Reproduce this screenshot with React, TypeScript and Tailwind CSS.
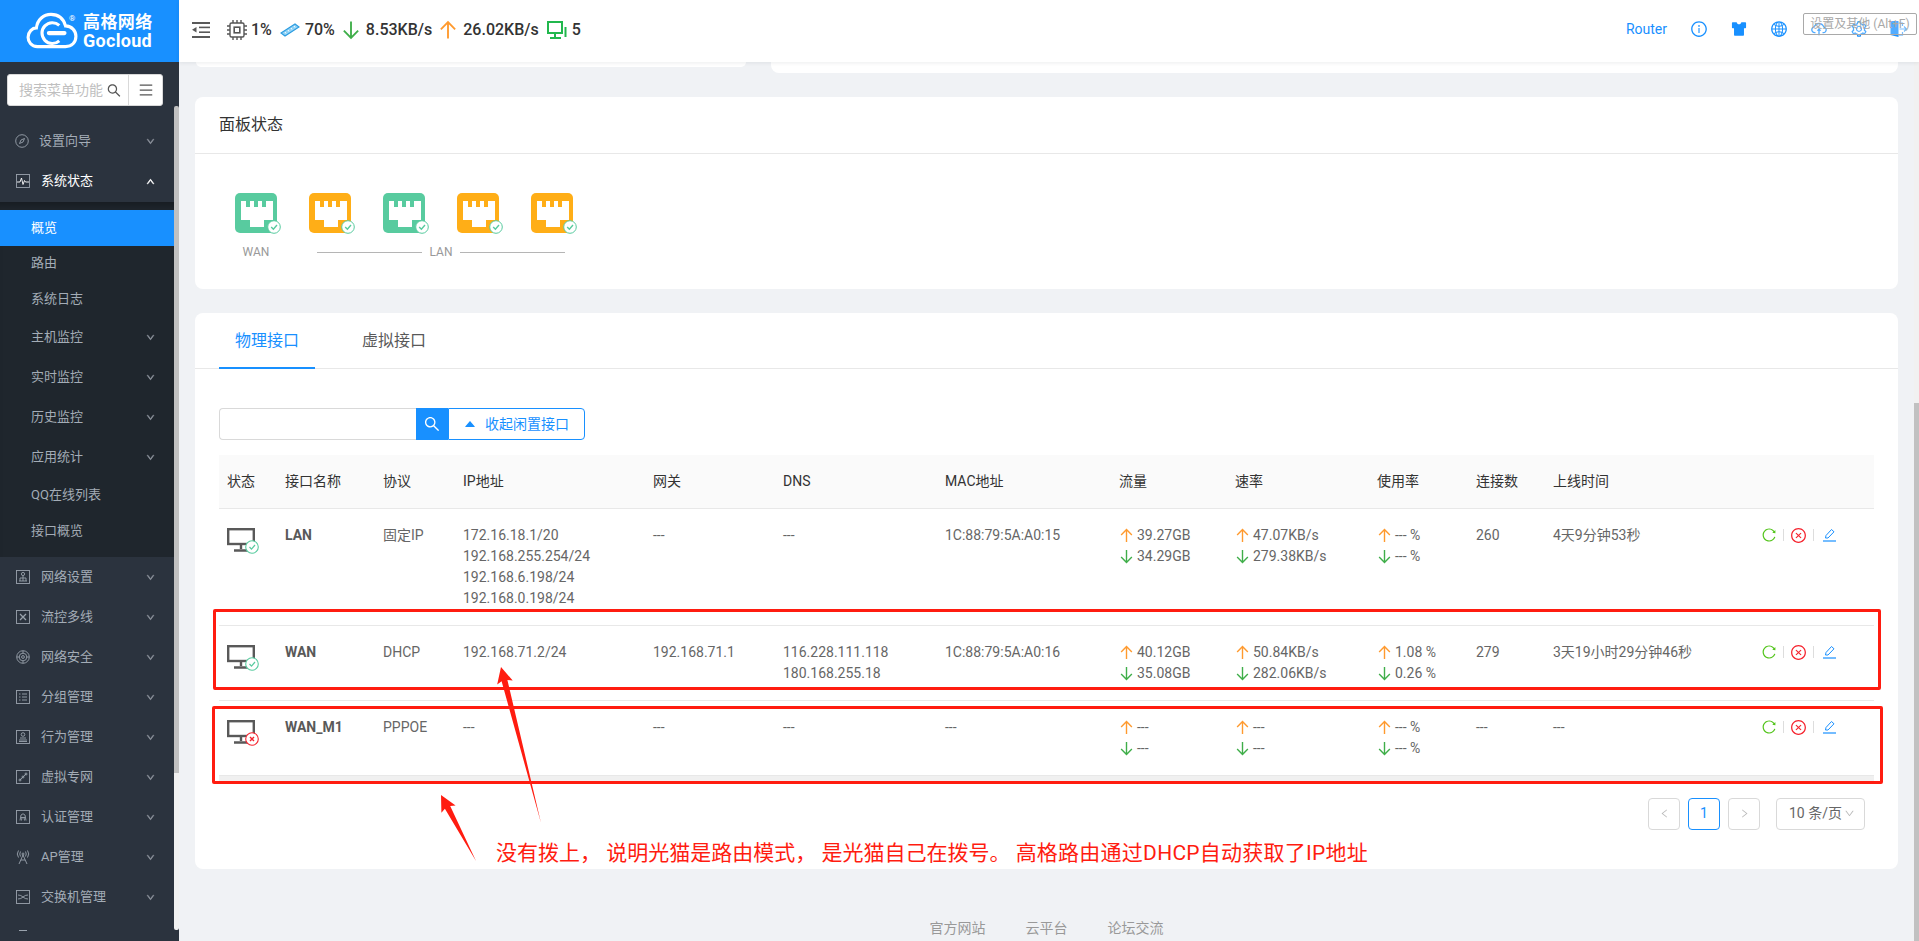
import { AiOutlineInfoCircle, AiFillSkin, AiOutlineGlobal, AiOutlineCloudUpload, AiOutlineSetting, AiOutlineReload, AiOutlineCloseCircle, AiOutlineSearch, AiOutlineMenu, AiOutlineDown, AiOutlineUp, AiOutlineLeft, AiOutlineRight, AiFillCaretUp } from "react-icons/ai";
import type { ReactNode } from "react";

function Logo() {
  return (
    <div className="h-[62px] bg-[#1890ff] flex items-center relative shrink-0">
      <svg width="52" height="37" viewBox="0 0 50 35" className="ml-[26px] mt-[-1px]" fill="none" stroke="white">
        <path strokeWidth="3" d="M11 33 C5 33 2 28 2 24 C2 19 6 15 10 15 C11 7 17 2 24 2 C31 2 36 6 38 13 C44 13 48 18 48 23 C48 29 44 33 38 33 Z" />
        <path strokeWidth="3" d="M32 12.5 A10 10 0 1 0 32 27.5" />
        <path strokeWidth="4" strokeLinecap="round" d="M22 20 H37" />
      </svg>
      <div className="ml-[5px] text-white font-bold leading-none mt-[-1px]">
        <div className="text-[17px] tracking-[0.4px] leading-[20px]">高格网络</div>
        <div className="text-[18px] tracking-[0.3px] leading-[18px]">Gocloud</div>
      </div>
      <span className="absolute left-[69px] top-[15px] text-[8px] text-white leading-none">®</span>
    </div>
  );
}

function Box({ children }: { children: ReactNode }) {
  return (
    <svg width="14" height="14" viewBox="0 0 14 14" fill="none" stroke="#9aa3ad" strokeWidth="0.9" className="shrink-0">
      <rect x="0.5" y="0.5" width="13" height="13" />
      {children}
    </svg>
  );
}

const menuIcons: Record<string, ReactNode> = {
  guide: (
    <svg width="14" height="14" viewBox="0 0 14 14" fill="none" stroke="#9aa3ad" strokeWidth="0.9" className="shrink-0 -ml-px">
      <circle cx="7" cy="7" r="6.3" />
      <path d="M9.5 4.5 L8 8 L4.5 9.5 L6 6 Z" />
    </svg>
  ),
  status: <Box><path stroke="#ffffff" d="M1 8 H4 L5.5 4 L7 10.5 L8.5 6.5 L9.5 8 H13" /></Box>,
  net: <Box><circle cx="7" cy="4" r="1.6" /><path d="M4 11 V8 H10 V11 M7 6 V11 M3 11 H11" /></Box>,
  flow: <Box><path d="M4 4 L10 10 M10 4 L4 10" strokeWidth="1.3" /></Box>,
  sec: (
    <svg width="14" height="14" viewBox="0 0 14 14" fill="none" stroke="#9aa3ad" strokeWidth="0.9" className="shrink-0">
      <circle cx="7" cy="7" r="6.3" />
      <circle cx="7" cy="7" r="3.8" />
      <circle cx="7" cy="7" r="1.4" />
      <path d="M7 1 V3 M7 11 V13 M1 7 H3 M11 7 H13" />
    </svg>
  ),
  group: <Box><path d="M6 4 H11 M6 7 H11 M6 10 H11 M3 4 H4.5 M3 7 H4.5 M3 10 H4.5" /></Box>,
  act: <Box><circle cx="7" cy="4.5" r="1.8" /><path d="M4 8 H10 M3 10 H11 M3 11.5 H11" /></Box>,
  vpn: <Box><path d="M4 10 L10 4" /><circle cx="4" cy="10" r="1" /><circle cx="10" cy="4" r="1" /><circle cx="7" cy="7" r="1" /></Box>,
  auth: <Box><path d="M4 10.5 L5 5 Q7 2.5 9 5 L10 10.5 M5 7.5 H9 M6 7.5 L5.5 10.5 M8 7.5 L8.5 10.5" /></Box>,
  ap: (
    <svg width="14" height="15" viewBox="0 0 14 15" fill="none" stroke="#9aa3ad" strokeWidth="0.9" className="shrink-0">
      <path d="M3 14 L7 5 L11 14 M5 10 H9" />
      <circle cx="7" cy="4" r="1" />
      <path d="M4.5 1.5 Q3 4 4.5 6.5 M9.5 1.5 Q11 4 9.5 6.5 M2.5 0.5 Q0 4 2.5 7.5 M11.5 0.5 Q14 4 11.5 7.5" />
    </svg>
  ),
  sw: <Box><path d="M2 5 Q5 5 7 7 Q9 9 12 9 M2 9 Q5 9 7 7 Q9 5 12 5" /></Box>,
};

function MenuItem({ icon, label, active, open }: { icon: string; label: string; active?: boolean; open?: boolean }) {
  return (
    <div className={`h-10 flex items-center pl-4 pr-[19px] text-[13px] ${active ? "text-white" : "text-[#a3acb6]"}`}>
      {menuIcons[icon]}
      <span className={`flex-1 ${icon === "guide" ? "ml-[10px]" : "ml-[11px]"}`}>{label}</span>
      {open ? <AiOutlineUp className="text-white" size={9} strokeWidth={80} /> : <AiOutlineDown className="text-[#8b929b]" size={9} strokeWidth={80} />}
    </div>
  );
}

function SubItem({ label, arrow, tall }: { label: string; arrow?: boolean; tall?: boolean }) {
  return (
    <div className={`flex items-center pl-[31px] pr-[19px] text-[13px] text-[#a3acb6] ${tall ? "h-10" : "h-9"}`}>
      <span className="flex-1">{label}</span>
      {arrow && <AiOutlineDown className="text-[#8b929b]" size={9} strokeWidth={80} />}
    </div>
  );
}

function Sidebar() {
  return (
    <aside className="w-[179px] h-full shrink-0 flex flex-col bg-[#2b333e] overflow-hidden">
      <Logo />
      <div className="flex flex-1 min-h-0">
        <div className="w-[174px] shrink-0 overflow-hidden">
          <div className="h-[59px] pt-3 pl-[7px]">
            <div className="w-[156px] h-8 bg-white rounded-[3px] border border-[#d9d9d9] flex items-center">
              <input placeholder="搜索菜单功能" className="w-[84px] ml-[11px] text-[14px] text-[#666] placeholder:text-[#bfbfbf] outline-none bg-transparent" />
              <AiOutlineSearch size={17} className="ml-[3px] text-[#555]" />
              <div className="ml-[6px] h-full w-9 border-l border-[#d9d9d9] flex items-center justify-center">
                <AiOutlineMenu size={16} className="text-[#555]" />
              </div>
            </div>
          </div>
          <MenuItem icon="guide" label="设置向导" />
          <div className="mb-px"><MenuItem icon="status" label="系统状态" active open /></div>
          <div className="bg-[#1f262d] pt-2 pb-2 shadow-[inset_0_8px_6px_-4px_rgba(0,0,0,0.25)]">
            <div className="h-9 -mb-px flex items-center pl-[31px] bg-[#1890ff] text-white text-[13px] relative">概览</div>
            <SubItem label="路由" />
            <SubItem label="系统日志" />
            <SubItem label="主机监控" arrow tall />
            <SubItem label="实时监控" arrow tall />
            <SubItem label="历史监控" arrow tall />
            <SubItem label="应用统计" arrow tall />
            <SubItem label="QQ在线列表" />
            <SubItem label="接口概览" />
          </div>
          <MenuItem icon="net" label="网络设置" />
          <MenuItem icon="flow" label="流控多线" />
          <MenuItem icon="sec" label="网络安全" />
          <MenuItem icon="group" label="分组管理" />
          <MenuItem icon="act" label="行为管理" />
          <MenuItem icon="vpn" label="虚拟专网" />
          <MenuItem icon="auth" label="认证管理" />
          <MenuItem icon="ap" label="AP管理" />
          <MenuItem icon="sw" label="交换机管理" />
          {/* top edge of the next icon peeks out below the list */}
          <div className="ml-[19px] mt-[13px] w-2 h-px bg-[#9aa3ad]" />
        </div>
        <div className="w-[5px] pt-[44px] pb-[11px] flex flex-col">
          <div className="h-[667px] bg-[#c1c1c1] rounded-t-[2px]" />
          <div className="flex-1 bg-[#f1f1f1] rounded-b-[2px]" />
        </div>
      </div>
    </aside>
  );
}

function UpArrow({ size = 14 }: { size?: number }) {
  return (
    <svg width={size} height={size} viewBox="0 0 14 14" fill="none" stroke="#ff9a2e" strokeWidth="1.3" className="shrink-0">
      <path d="M7 13 V1.5 M2 6.5 L7 1.5 L12 6.5" />
    </svg>
  );
}

function DownArrow({ size = 14 }: { size?: number }) {
  return (
    <svg width={size} height={size} viewBox="0 0 14 14" fill="none" stroke="#3fae49" strokeWidth="1.3" className="shrink-0">
      <path d="M7 1 V12.5 M2 7.5 L7 12.5 L12 7.5" />
    </svg>
  );
}

function Header() {
  return (
    <header className="h-[62px] shrink-0 bg-white shadow-[0_1px_4px_rgba(0,21,41,0.08)] z-10 relative flex items-center text-[#333]">
      <svg width="18" height="16" viewBox="0 0 18 16" className="ml-[13px] mt-[-2px]" fill="#595959">
        <rect width="18" height="2" />
        <rect x="7" y="4.6" width="11" height="1.6" />
        <rect x="7" y="9.4" width="11" height="1.6" />
        <rect y="14" width="18" height="2" />
        <path d="M0 7.8 L4.5 5 V10.6 Z" />
      </svg>
      <div className="ml-[17px] flex items-center text-[16px] font-medium mt-[-2px]">
        <svg width="20" height="20" viewBox="0 0 20 20" fill="none" stroke="#555" strokeWidth="1.4">
          <rect x="3" y="3" width="14" height="14" rx="1.5" />
          <rect x="7.2" y="7.2" width="5.6" height="5.6" strokeWidth="1.6" />
          <path d="M6 0 V3 M10 0 V3 M14 0 V3 M6 17 V20 M10 17 V20 M14 17 V20 M0 6 H3 M0 10 H3 M0 14 H3 M17 6 H20 M17 10 H20 M17 14 H20" />
        </svg>
        <span className="ml-1">1%</span>
        <svg width="20" height="14" viewBox="0 0 20 14" className="ml-2" fill="none">
          <path d="M1 10 L15 1 L19 4 L5 13 Z" fill="#8ed1f5" stroke="#2a9be0" strokeWidth="1.1" />
          <path d="M5 9 L6 10.5 M8 7 L9 8.5 M11 5 L12 6.5 M14 3 L15 4.5" stroke="#fff" strokeWidth="1" />
        </svg>
        <span className="ml-[5px]">70%</span>
        <span className="ml-[6px]"><DownArrow size={20} /></span>
        <span className="ml-[5px]">8.53KB/s</span>
        <span className="ml-[6px]"><UpArrow size={20} /></span>
        <span className="ml-[5px]">26.02KB/s</span>
        <svg width="20" height="19" viewBox="0 0 20 19" className="ml-2" fill="none" stroke="#21b84d" strokeWidth="2">
          <rect x="1" y="1" width="14" height="11" />
          <path d="M8 12 V16 M3 17 H14 M18.5 6 V16" />
        </svg>
        <span className="ml-[5px]">5</span>
      </div>
      <div className="ml-auto pr-3 pb-[4px] flex items-center text-[#1890ff]">
        <span className="text-[14px] mr-[23px]">Router</span>
        <span className="flex gap-[22px] items-center">
          <AiOutlineInfoCircle size={18} />
          <AiFillSkin size={18} />
          <AiOutlineGlobal size={18} />
          <AiOutlineCloudUpload size={18} />
          <AiOutlineSetting size={18} />
          <svg width="17" height="18" viewBox="0 0 16 18" fill="none" className="text-[#4aa6ff]">
            <path d="M0 1 H8 V17 L0 15 Z" fill="#1890ff" />
            <path d="M8 3 H12 V6 M12 12 V15 H8 M9 9 H16 M13.5 6.5 L16 9 L13.5 11.5" stroke="currentColor" strokeWidth="1.2" />
          </svg>
        </span>
      </div>
      <div className="absolute right-[2px] top-[13px] w-[114px] h-[22px] border border-[#a9a9a9] rounded-[2px] bg-white/25 flex items-center justify-center text-[12px] text-[#a8a8a8]">
        设置及其他 (Alt+F)
      </div>
    </header>
  );
}

function PortIcon({ color }: { color: string }) {
  return (
    <svg width="42" height="40" viewBox="0 0 42 40" className="overflow-visible">
      <rect width="42" height="40" rx="5" fill={color} />
      <path fill="#fff" d="M6 8 H11 V14 H15 V8 H19 V14 H23 V8 H27 V14 H31 V8 H38 V27 H29 V34 H15 V27 H6 Z" />
      <circle cx="39" cy="34" r="6.3" fill="#fff" stroke="#58cb9f" strokeWidth="1" />
      <path d="M36.2 34 L38.4 36.3 L42 32" fill="none" stroke="#58cb9f" strokeWidth="1.4" />
    </svg>
  );
}

function PanelCard() {
  return (
    <section className="mt-6 bg-white rounded-lg">
      <div className="h-[57px] border-b border-[#e8e8e8] flex items-center pl-6 text-[16px] text-[#333]">面板状态</div>
      <div className="pl-10 pt-[39px] pb-[28px]">
        <div className="flex gap-8">
          <PortIcon color="#58cb9f" />
          <PortIcon color="#ffae17" />
          <PortIcon color="#58cb9f" />
          <PortIcon color="#ffae17" />
          <PortIcon color="#ffae17" />
        </div>
        <div className="mt-[10px] h-[18px] flex items-center text-[12px] text-[#999]">
          <span className="w-[42px] text-center">WAN</span>
          <div className="ml-10 w-[248px] flex items-center gap-2">
            <div className="flex-1 h-px bg-[#b5b5b5]" />
            <span>LAN</span>
            <div className="flex-1 h-px bg-[#b5b5b5]" />
          </div>
        </div>
      </div>
    </section>
  );
}

function MonitorIcon({ ok }: { ok: boolean }) {
  const c = ok ? "#58cb9f" : "#f5222d";
  return (
    <svg width="28" height="25" viewBox="0 0 28 25" className="overflow-visible mt-[3px]" fill="none">
      <rect x="1.2" y="1.2" width="25.6" height="14.8" stroke="#595959" strokeWidth="2.4" />
      <path d="M14 16 V21 M7 22.5 H21" stroke="#595959" strokeWidth="2.4" />
      <circle cx="25" cy="19" r="6.3" fill="#fff" stroke={c} strokeWidth="1.1" />
      {ok ? <path d="M22.5 19 L24.5 21.2 L28 17" stroke={c} strokeWidth="1.2" /> : <path d="M23 17 L27 21 M27 17 L23 21" stroke={c} strokeWidth="1.4" />}
    </svg>
  );
}

function Updown({ up, down }: { up: string; down: string }) {
  return (
    <>
      <div className="flex items-center gap-[3px]"><UpArrow size={15} />{up}</div>
      <div className="flex items-center gap-[3px]"><DownArrow size={15} />{down}</div>
    </>
  );
}

function Actions() {
  return (
    <div className="flex items-center h-[21px]">
      <AiOutlineReload size={16} className="text-[#52c41a]" />
      <div className="ml-[6px] w-px h-[12px] bg-[#ddd]" />
      <AiOutlineCloseCircle size={17} className="ml-[6px] text-[#f5222d]" />
      <div className="ml-[6px] w-px h-[12px] bg-[#ddd]" />
      <svg width="13" height="14" viewBox="0 0 13 14" fill="none" stroke="#1890ff" strokeWidth="1" className="ml-[9px]">
        <path d="M2.5 10 L3 7.5 L8.5 1.5 L11 3.8 L5 10 Z" />
        <path d="M0 13 H13" strokeWidth="1.2" />
      </svg>
    </div>
  );
}

const columns = [
  { t: "状态", w: "w-[58px]" },
  { t: "接口名称", w: "w-[98px]" },
  { t: "协议", w: "w-[80px]" },
  { t: "IP地址", w: "w-[190px]" },
  { t: "网关", w: "w-[130px]" },
  { t: "DNS", w: "w-[162px]" },
  { t: "MAC地址", w: "w-[174px]" },
  { t: "流量", w: "w-[116px]" },
  { t: "速率", w: "w-[142px]" },
  { t: "使用率", w: "w-[99px]" },
  { t: "连接数", w: "w-[77px]" },
  { t: "上线时间", w: "w-[208px]" },
  { t: "", w: "w-[121px]" },
];

const rows = [
  {
    ok: true, name: "LAN", proto: "固定IP",
    ip: ["172.16.18.1/20", "192.168.255.254/24", "192.168.6.198/24", "192.168.0.198/24"],
    gw: "---", dns: ["---"], mac: "1C:88:79:5A:A0:15",
    flow: ["39.27GB", "34.29GB"], rate: ["47.07KB/s", "279.38KB/s"], use: ["--- %", "--- %"],
    conn: "260", up: "4天9分钟53秒",
  },
  {
    ok: true, name: "WAN", proto: "DHCP",
    ip: ["192.168.71.2/24"],
    gw: "192.168.71.1", dns: ["116.228.111.118", "180.168.255.18"], mac: "1C:88:79:5A:A0:16",
    flow: ["40.12GB", "35.08GB"], rate: ["50.84KB/s", "282.06KB/s"], use: ["1.08 %", "0.26 %"],
    conn: "279", up: "3天19小时29分钟46秒",
  },
  {
    ok: false, name: "WAN_M1", proto: "PPPOE",
    ip: ["---"],
    gw: "---", dns: ["---"], mac: "---",
    flow: ["---", "---"], rate: ["---", "---"], use: ["--- %", "--- %"],
    conn: "---", up: "---",
  },
];

function PortTable() {
  return (
    <table className="table-fixed w-[1655px] border-collapse text-[14px] leading-[21px] text-[#666]">
      <thead>
        <tr className="h-[53px] bg-[#fafafa] border-b border-[#e8e8e8]">
          {columns.map((c, i) => (
            <th key={i} className={`${c.w} px-2 text-left font-normal text-[#333]`}>{c.t}</th>
          ))}
        </tr>
      </thead>
      <tbody>
        {rows.map((r) => (
          <tr key={r.name} className="border-b border-[#e8e8e8] align-top">
            <td className="px-2 py-4"><MonitorIcon ok={r.ok} /></td>
            <td className="px-2 py-4 font-bold text-[#595959]">{r.name}</td>
            <td className="px-2 py-4">{r.proto}</td>
            <td className="px-2 py-4">{r.ip.map((x) => <div key={x}>{x}</div>)}</td>
            <td className="px-2 py-4">{r.gw}</td>
            <td className="px-2 py-4">{r.dns.map((x) => <div key={x}>{x}</div>)}</td>
            <td className="px-2 py-4">{r.mac}</td>
            <td className="px-2 py-4"><Updown up={r.flow[0]} down={r.flow[1]} /></td>
            <td className="px-2 py-4"><Updown up={r.rate[0]} down={r.rate[1]} /></td>
            <td className="px-2 py-4"><Updown up={r.use[0]} down={r.use[1]} /></td>
            <td className="px-2 py-4">{r.conn}</td>
            <td className="px-2 py-4">{r.up}</td>
            <td className="px-2 py-4"><Actions /></td>
          </tr>
        ))}
      </tbody>
    </table>
  );
}

function InterfaceCard() {
  return (
    <section className="mt-6 bg-white rounded-lg px-6 pb-[39px] relative">
      <div className="-mx-6 px-6 h-[56px] border-b border-[#e8e8e8] flex text-[16px]">
        <div className="w-24 h-[56px] pt-px border-b-2 border-[#1890ff] text-[#1890ff] flex items-center justify-center">物理接口</div>
        <div className="ml-[31px] w-24 h-[55px] pt-px text-[#595959] flex items-center justify-center">虚拟接口</div>
      </div>
      <div className="mt-[39px] flex h-8">
        <input className="w-[197px] border border-r-0 border-[#d9d9d9] rounded-l-[4px] outline-none" />
        <div className="w-8 bg-[#1890ff] flex items-center justify-center text-white"><AiOutlineSearch size={18} /></div>
        <div className="w-[137px] border border-[#1890ff] rounded-r-[4px] text-[#1890ff] text-[14px] flex items-center pl-[14px]">
          <AiFillCaretUp size={14} />
          <span className="ml-[8px]">收起闲置接口</span>
        </div>
      </div>
      <div className="mt-[15px]">
        <PortTable />
        <div className="h-[7px] bg-[#f0f0f0]" />
      </div>
      <div className="mt-[15px] pr-[9px] flex justify-end items-center text-[14px] text-[#666]">
        <div className="w-8 h-8 border border-[#d9d9d9] rounded-[4px] flex items-center justify-center text-[#bbb]"><AiOutlineLeft size={11} /></div>
        <div className="ml-2 w-8 h-8 border border-[#1890ff] rounded-[4px] flex items-center justify-center text-[#1890ff]">1</div>
        <div className="ml-2 w-8 h-8 border border-[#d9d9d9] rounded-[4px] flex items-center justify-center text-[#bbb]"><AiOutlineRight size={11} /></div>
        <div className="ml-4 w-[89px] h-8 border border-[#d9d9d9] rounded-[4px] flex items-center pl-3">
          10 条/页
          <AiOutlineDown size={11} className="ml-[2px] text-[#bbb]" />
        </div>
      </div>
    </section>
  );
}

export default function App() {
  return (
    <div className="h-screen w-full flex overflow-hidden relative bg-[#f0f2f5] [font-family:Roboto,'Noto_Sans_CJK_SC',sans-serif]">
      <Sidebar />
      <div className="flex-1 min-w-0 h-full flex flex-col">
        <Header />
        <div className="flex flex-1 min-h-0">
          <main className="flex-1 min-w-0 px-4 overflow-hidden">
            <div className="flex h-[11px] gap-[25px] items-start">
              <div className="ml-px w-[550px] h-[5px] bg-white rounded-b-lg" />
              <div className="flex-1 h-[11px] bg-white rounded-b-lg" />
            </div>
            <PanelCard />
            <InterfaceCard />
            <footer className="mt-[49px] flex justify-center gap-10 text-[14px] text-[#999]">
              <span>官方网站</span>
              <span>云平台</span>
              <span>论坛交流</span>
            </footer>
          </main>
          <div className="w-[5px] flex flex-col pt-[341px] bg-[#f1f1f1]">
            <div className="flex-1 bg-[#c1c1c1]" />
          </div>
        </div>
      </div>

      {/* annotations drawn on top of the screenshot */}
      <div className="absolute left-[213px] top-[609px] w-[1668px] h-[81px] border-[3px] border-[#ff1c10] rounded-[2px] pointer-events-none" />
      <div className="absolute left-[212px] top-[706px] w-[1671px] h-[78px] border-[3px] border-[#ff1c10] rounded-[2px] pointer-events-none" />
      <svg className="absolute left-0 top-0 pointer-events-none" width="1919" height="941" fill="#ff1c10">
        <polygon points="541,823 507.4,679.9 512.7,680.5 501,667 497.2,684.5 501.6,681.3" />
        <polygon points="476,861 450.2,806 455.6,805.4 441,795 441.4,812.8 444.9,808.8" />
      </svg>
      <span className="absolute left-[496px] top-[838px] text-[21px] leading-[30px] text-[#ff1c10] whitespace-pre">
        没有拨上， 说明光猫是路由模式， 是光猫自己在拨号。 <span className="tracking-[0.25px]">高格路由通过DHCP自动获取了IP地址</span>
      </span>
    </div>
  );
}
